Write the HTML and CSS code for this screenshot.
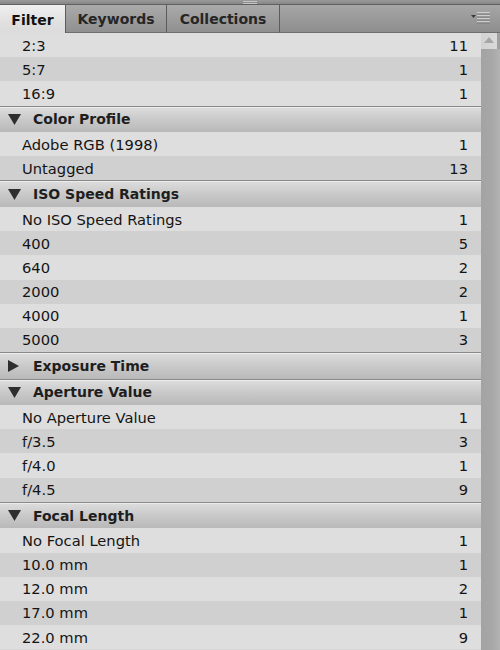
FILE: index.html
```html
<!DOCTYPE html>
<html>
<head>
<meta charset="utf-8">
<link rel="stylesheet" href="styles.css">
</head>
<body>
<div class="panel">
  <div class="topstrip"><span class="grip"></span></div>
  <div class="tabs">
    <div class="tab tab-filter active">Filter</div>
    <div class="tab tab-keywords">Keywords</div>
    <div class="tab tab-collections">Collections</div>
    <div class="filler">
      <span class="menu">
        <svg width="20" height="12" viewBox="0 0 20 12">
          <polygon points="0,3 5,3 2.5,6" fill="#3a3a3a"/>
          <rect x="6" y="0" width="13" height="1.5" fill="#cfcfcf"/>
          <rect x="6" y="3" width="13" height="1.5" fill="#cfcfcf"/>
          <rect x="6" y="6" width="13" height="1.5" fill="#cfcfcf"/>
          <rect x="6" y="9" width="13" height="1.5" fill="#cfcfcf"/>
          <rect x="6" y="1.5" width="13" height="1" fill="#7a7a7a"/>
          <rect x="6" y="4.5" width="13" height="1" fill="#7a7a7a"/>
          <rect x="6" y="7.5" width="13" height="1" fill="#7a7a7a"/>
          <rect x="6" y="10.5" width="13" height="1" fill="#7a7a7a"/>
        </svg>
      </span>
    </div>
  </div>
  <div class="body">
    <div class="list">
      <div class="row"><span>2:3</span><span>11</span></div>
      <div class="row alt"><span>5:7</span><span>1</span></div>
      <div class="row"><span>16:9</span><span>1</span></div>

      <div class="header"><svg class="tri" width="13" height="11" viewBox="0 0 13 11"><polygon points="0,0 13,0 6.5,11" fill="#2e2e2e"/></svg><span>Color Profile</span></div>
      <div class="row"><span>Adobe RGB (1998)</span><span>1</span></div>
      <div class="row alt"><span>Untagged</span><span>13</span></div>

      <div class="header"><svg class="tri" width="13" height="11" viewBox="0 0 13 11"><polygon points="0,0 13,0 6.5,11" fill="#2e2e2e"/></svg><span>ISO Speed Ratings</span></div>
      <div class="row"><span>No ISO Speed Ratings</span><span>1</span></div>
      <div class="row alt"><span>400</span><span>5</span></div>
      <div class="row"><span>640</span><span>2</span></div>
      <div class="row alt"><span>2000</span><span>2</span></div>
      <div class="row"><span>4000</span><span>1</span></div>
      <div class="row alt"><span>5000</span><span>3</span></div>

      <div class="header"><svg class="tri" width="13" height="12" viewBox="0 0 13 12"><polygon points="0,0 11,6 0,12" fill="#2e2e2e"/></svg><span>Exposure Time</span></div>

      <div class="header"><svg class="tri" width="13" height="11" viewBox="0 0 13 11"><polygon points="0,0 13,0 6.5,11" fill="#2e2e2e"/></svg><span>Aperture Value</span></div>
      <div class="row"><span>No Aperture Value</span><span>1</span></div>
      <div class="row alt"><span>f/3.5</span><span>3</span></div>
      <div class="row"><span>f/4.0</span><span>1</span></div>
      <div class="row alt"><span>f/4.5</span><span>9</span></div>

      <div class="header"><svg class="tri" width="13" height="11" viewBox="0 0 13 11"><polygon points="0,0 13,0 6.5,11" fill="#2e2e2e"/></svg><span>Focal Length</span></div>
      <div class="row"><span>No Focal Length</span><span>1</span></div>
      <div class="row alt"><span>10.0 mm</span><span>1</span></div>
      <div class="row"><span>12.0 mm</span><span>2</span></div>
      <div class="row alt"><span>17.0 mm</span><span>1</span></div>
      <div class="row"><span>22.0 mm</span><span>9</span></div>
    </div>
    <div class="scrollbar">
      <div class="arrow"><svg width="10" height="6" viewBox="0 0 10 6"><polygon points="0,6 10,6 5,0" fill="#a6a6a6"/></svg></div>
      <div class="thumb"></div>
    </div>
  </div>
</div>
</body>
</html>
```

FILE: styles.css
```css
* { box-sizing: border-box; }
html, body { margin: 0; padding: 0; }
body {
  width: 500px;
  height: 650px;
  overflow: hidden;
  background: #d6d6d6;
  font-family: "DejaVu Sans", "Liberation Sans", sans-serif;
  font-size: 14.7px;
  color: #141414;
}
.panel {
  width: 500px;
  height: 650px;
  display: flex;
  flex-direction: column;
  overflow: hidden;
}
.topstrip {
  height: 5px;
  background: linear-gradient(#9a9a9a, #868686);
  border-bottom: 1px solid #606060;
  display: flex;
  justify-content: center;
  flex: none;
}
.grip {
  width: 14px;
  height: 1px;
  margin-top: 1px;
  background: #c4c4c4;
  box-shadow: 0 2px 0 #c4c4c4;
}
.tabs {
  height: 28px;
  display: flex;
  flex: none;
}
.tab {
  display: flex;
  align-items: center;
  justify-content: center;
  font-weight: bold;
  font-size: 14px;
  color: #262626;
  border-right: 1px solid #5c5c5c;
  background: linear-gradient(#aaaaaa, #909090);
  border-bottom: 1px solid #6e6e6e;
  padding-top: 1px;
}
.tab.active {
  background: linear-gradient(#f0f0f0, #e0e0e0 60%, #dcdcdc);
  border-bottom: none;
  color: #111;
}
.tab-filter { width: 66px; }
.tab-keywords { width: 101px; }
.tab-collections { width: 113px; }
.filler {
  flex: 1;
  background: linear-gradient(#a6a6a6, #8e8e8e);
  border-bottom: 1px solid #6e6e6e;
  display: flex;
  align-items: center;
  justify-content: flex-end;
  padding-right: 9px;
}
.menu { display: flex; margin-top: -2px; }
.body {
  flex: 1;
  display: flex;
  min-height: 0;
}
.list {
  width: 481px;
  flex: none;
  display: flex;
  flex-direction: column;
}
.row {
  height: 24.2px;
  flex: none;
  display: flex;
  align-items: center;
  justify-content: space-between;
  padding: 0 13px 0 22px;
  background: #dedede;
}
.row.alt { background: #d0d0d0; }
.header {
  height: 26.5px;
  flex: none;
  display: flex;
  align-items: center;
  padding-left: 8px;
  gap: 12px;
  font-weight: bold;
  font-size: 14px;
  color: #1e1e1e;
  border-top: 1px solid #8a8a8a;
  background: linear-gradient(#dddddd, #c9c9c9 50%, #b9b9b9);
  box-shadow: inset 0 1px 0 #ececec;
}
.tri { flex: none; }
.scrollbar {
  flex: 1;
  display: flex;
  flex-direction: column;
  background: #a9a9a9;
}
.arrow {
  height: 16px;
  display: flex;
  justify-content: center;
  align-items: flex-start;
  padding-top: 4px;
  background: linear-gradient(90deg, #d2d2d2, #dadada);
  border-right: 3px solid #a0a0a0;
}
.thumb {
  flex: 1;
  background: linear-gradient(90deg, #a3a3a3 0%, #a8a8a8 60%, #b3b3b3 100%);
}
```
